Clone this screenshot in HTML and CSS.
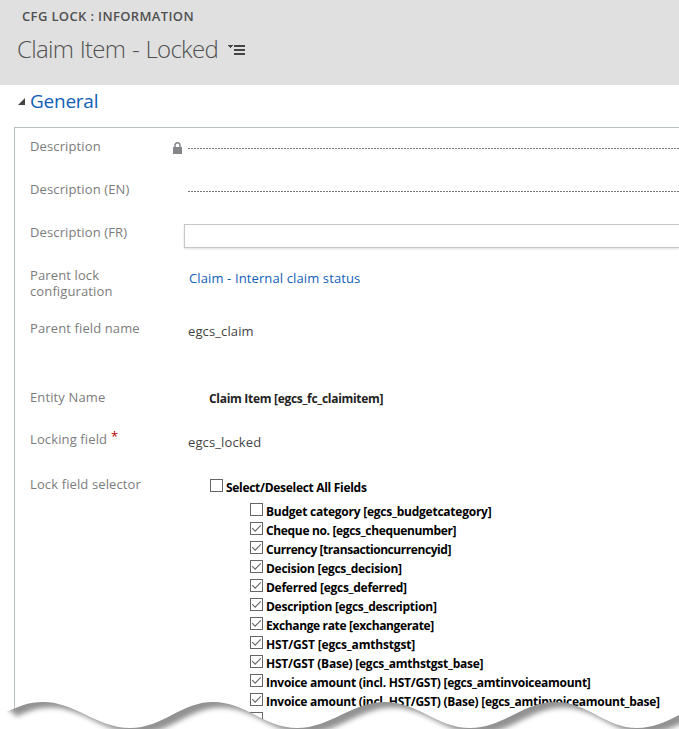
FILE: index.html
```html
<!DOCTYPE html>
<html lang="en">
<head>
<meta charset="utf-8">
<title>Claim Item - Locked</title>
<link rel="stylesheet" href="styles.css">
</head>
<body>
<svg class="defs" width="0" height="0"><defs>
<symbol id="check" viewBox="0 0 11 11"><path d="M1.2 5.2 4.1 8.1 9.8 2.4" fill="none" stroke="#666" stroke-width="1.1"/></symbol>
</defs></svg>
<header class="header">
  <div class="crumb">CFG LOCK : INFORMATION</div>
  <div class="title-row">
    <h1 class="title">Claim Item - Locked</h1>
    <svg class="menu-icon" width="18" height="12" viewBox="0 0 18 12" shape-rendering="crispEdges"><path d="M0 0h5v1H4v1H3v1H2V2H1V1H0zM6 0h11v2H6zM6 4h11v2H6zM6 8h11v2H6z" fill="#444"/></svg>
  </div>
</header>
<main>
  <h2 class="section-title"><svg width="7" height="7" viewBox="0 0 7 7"><path d="M7 0v7H0z" fill="#444"/></svg><span>General</span></h2>
  <section class="panel">
    <div class="row"><div class="label"><span>Description</span><svg class="lock" width="9" height="12" viewBox="0 0 9 12"><path d="M2 6V3.2a2.5 2.5 0 0 1 5 0V6" fill="none" stroke="#85868a" stroke-width="1.5"/><path d="M0 5h9v7H0z" fill="#85868a"/></svg></div><div class="dotted"></div></div>
    <div class="row"><div class="label">Description (EN)</div><div class="dotted"></div></div>
    <div class="row"><div class="label">Description (FR)</div><div class="input"></div></div>
    <div class="row row-parent"><div class="label">Parent lock<br>configuration</div><a class="value link">Claim - Internal claim status</a></div>
    <div class="row row-field"><div class="label">Parent field name</div><div class="value">egcs_claim</div></div>
    <div class="row row-entity"><div class="label">Entity Name</div><div class="value entity">Claim Item [egcs_fc_claimitem]</div></div>
    <div class="row row-locking"><div class="label">Locking field<sup>*</sup></div><div class="value">egcs_locked</div></div>
    <div class="row row-selector"><div class="label">Lock field selector</div>
      <div class="selector">
        <div class="option all"><i class="box"></i><span>Select/Deselect All Fields</span></div>
        <div class="options">
          <div class="option"><i class="box"></i><span>Budget category [egcs_budgetcategory]</span></div>
          <div class="option"><i class="box"><svg><use href="#check"/></svg></i><span>Cheque no. [egcs_chequenumber]</span></div>
          <div class="option"><i class="box"><svg><use href="#check"/></svg></i><span>Currency [transactioncurrencyid]</span></div>
          <div class="option"><i class="box"><svg><use href="#check"/></svg></i><span>Decision [egcs_decision]</span></div>
          <div class="option"><i class="box"><svg><use href="#check"/></svg></i><span>Deferred [egcs_deferred]</span></div>
          <div class="option"><i class="box"><svg><use href="#check"/></svg></i><span>Description [egcs_description]</span></div>
          <div class="option"><i class="box"><svg><use href="#check"/></svg></i><span>Exchange rate [exchangerate]</span></div>
          <div class="option"><i class="box"><svg><use href="#check"/></svg></i><span>HST/GST [egcs_amthstgst]</span></div>
          <div class="option"><i class="box"><svg><use href="#check"/></svg></i><span>HST/GST (Base) [egcs_amthstgst_base]</span></div>
          <div class="option"><i class="box"><svg><use href="#check"/></svg></i><span>Invoice amount (incl. HST/GST) [egcs_amtinvoiceamount]</span></div>
          <div class="option"><i class="box"><svg><use href="#check"/></svg></i><span>Invoice amount (incl. HST/GST) (Base) [egcs_amtinvoiceamount_base]</span></div>
          <div class="option"><i class="box"></i></div>
        </div>
      </div>
    </div>
  </section>
</main>
<svg class="tear" width="679" height="39" viewBox="0 0 679 39">
  <defs>
    <path id="wave" d="M7 22C19 16 29 12 43 12C75 12 97 38 130 38C163 38 181 12 213 12C246 12 264 38 297 38C330 38 352 12 385 12C418 12 437 38 470 38C503 38 523 12 555 12C588 12 605 38 637 38C653 38 668 31 679 25L720 5V70H7Z"/>
    <clipPath id="below"><use href="#wave"/></clipPath>
    <filter id="soft" x="-10%" y="-50%" width="120%" height="200%"><feGaussianBlur stdDeviation="2.4"/></filter>
  </defs>
  <path d="M0 22H7V39H0Z" fill="#fff"/>
  <g clip-path="url(#below)">
    <path d="M0 0H679V39H0Z" fill="#929292"/>
    <g transform="translate(8 5.5)" fill="#fff" filter="url(#soft)">
      <use href="#wave"/>
      <path d="M-30 10H-4L8 20V70H-30Z"/>
    </g>
  </g>
</svg>
</body>
</html>
```
FILE: styles.css
```css
* { box-sizing: border-box; }
body {
  margin: 0;
  width: 679px;
  height: 729px;
  overflow: hidden;
  position: relative;
  background: #fff;
  font: 13px/16px "Open Sans", "Noto Sans", sans-serif;
  letter-spacing: .12px;
  color: #444;
}
.defs { display: block; }
.header { height: 85px; padding: 8px 0 0 17px; background: #e0e0e0; }
.crumb { padding-left: 5px; font-size: 13px; font-weight: 600; line-height: 17px; letter-spacing: .36px; white-space: nowrap; color: #505050; }
.title-row { display: flex; align-items: center; height: 48px; }
.title { margin: 0; font-size: 24px; font-weight: 300; line-height: 32px; letter-spacing: -.7px; word-spacing: 1px; white-space: nowrap; width: 211px; color: #505050; }
.menu-icon { margin-top: 3px; }
.section-title { display: flex; align-items: center; gap: 5px; margin: 0; height: 42px; padding: 0 0 10px 18px; font-size: 19px; font-weight: 400; line-height: 32px; letter-spacing: -.25px; color: #1160b7; }
.panel { height: 620px; margin-left: 14px; padding: 10px 0 0 15px; border: 1px solid #b9c0c2; border-right: 0; border-bottom: 0; }
.row { display: grid; grid-template-columns: 154px 1fr; height: 43px; align-items: start; }
.label { display: flow-root; color: #7c7c7c; white-space: nowrap; }
.label:has(.lock) { display: flex; justify-content: space-between; padding-right: 2px; }
.lock { margin-top: 4px; }
.label sup { margin-left: 4px; font-size: 13px; line-height: 0; vertical-align: 3px; color: #b00000; }
.dotted { margin: 10px 0 0 4px; height: 1px; background: repeating-linear-gradient(90deg, #777 0 2px, #fff 2px 3px); }
.input { height: 24px; border: 1px solid #c6c6c6; border-right: 0; box-shadow: 0 1px 2px #ddd; }
.value { padding: 3px 0 0 4px; white-space: nowrap; }
.link { padding-left: 5px; color: #1160b7; }
.row-parent { height: 53px; }
.row-field { height: 69px; }
.row-entity { height: 42px; }
.row-locking { height: 45px; }
.row-selector { height: auto; }
.entity { padding: 2px 0 0 25px; font-size: 12px; font-weight: 700; letter-spacing: -.3px; color: #222; }
.selector { padding: 3px 0 0 26px; }
.option { display: flex; gap: 3px; height: 19px; font-size: 12px; font-weight: 700; line-height: 17px; letter-spacing: -.27px; color: #000; white-space: nowrap; }
.option.all { height: 24px; letter-spacing: -.3px; }
.options { padding-left: 40px; }
.options .option:nth-child(1) { letter-spacing: -.24px; }
.options .option:nth-child(2) { letter-spacing: -.34px; }
.options .option:nth-child(3) { letter-spacing: -.44px; }
.options .option:nth-child(7) { letter-spacing: -.36px; }
.options .option:nth-child(8) { letter-spacing: -.17px; }
.options .option:nth-child(9) { letter-spacing: -.23px; }
.box { display: block; flex: none; width: 13px; height: 13px; border: 1px solid #666; }
.box svg { display: block; width: 11px; height: 11px; }
.tear { position: absolute; left: 0; top: 690px; }
```
